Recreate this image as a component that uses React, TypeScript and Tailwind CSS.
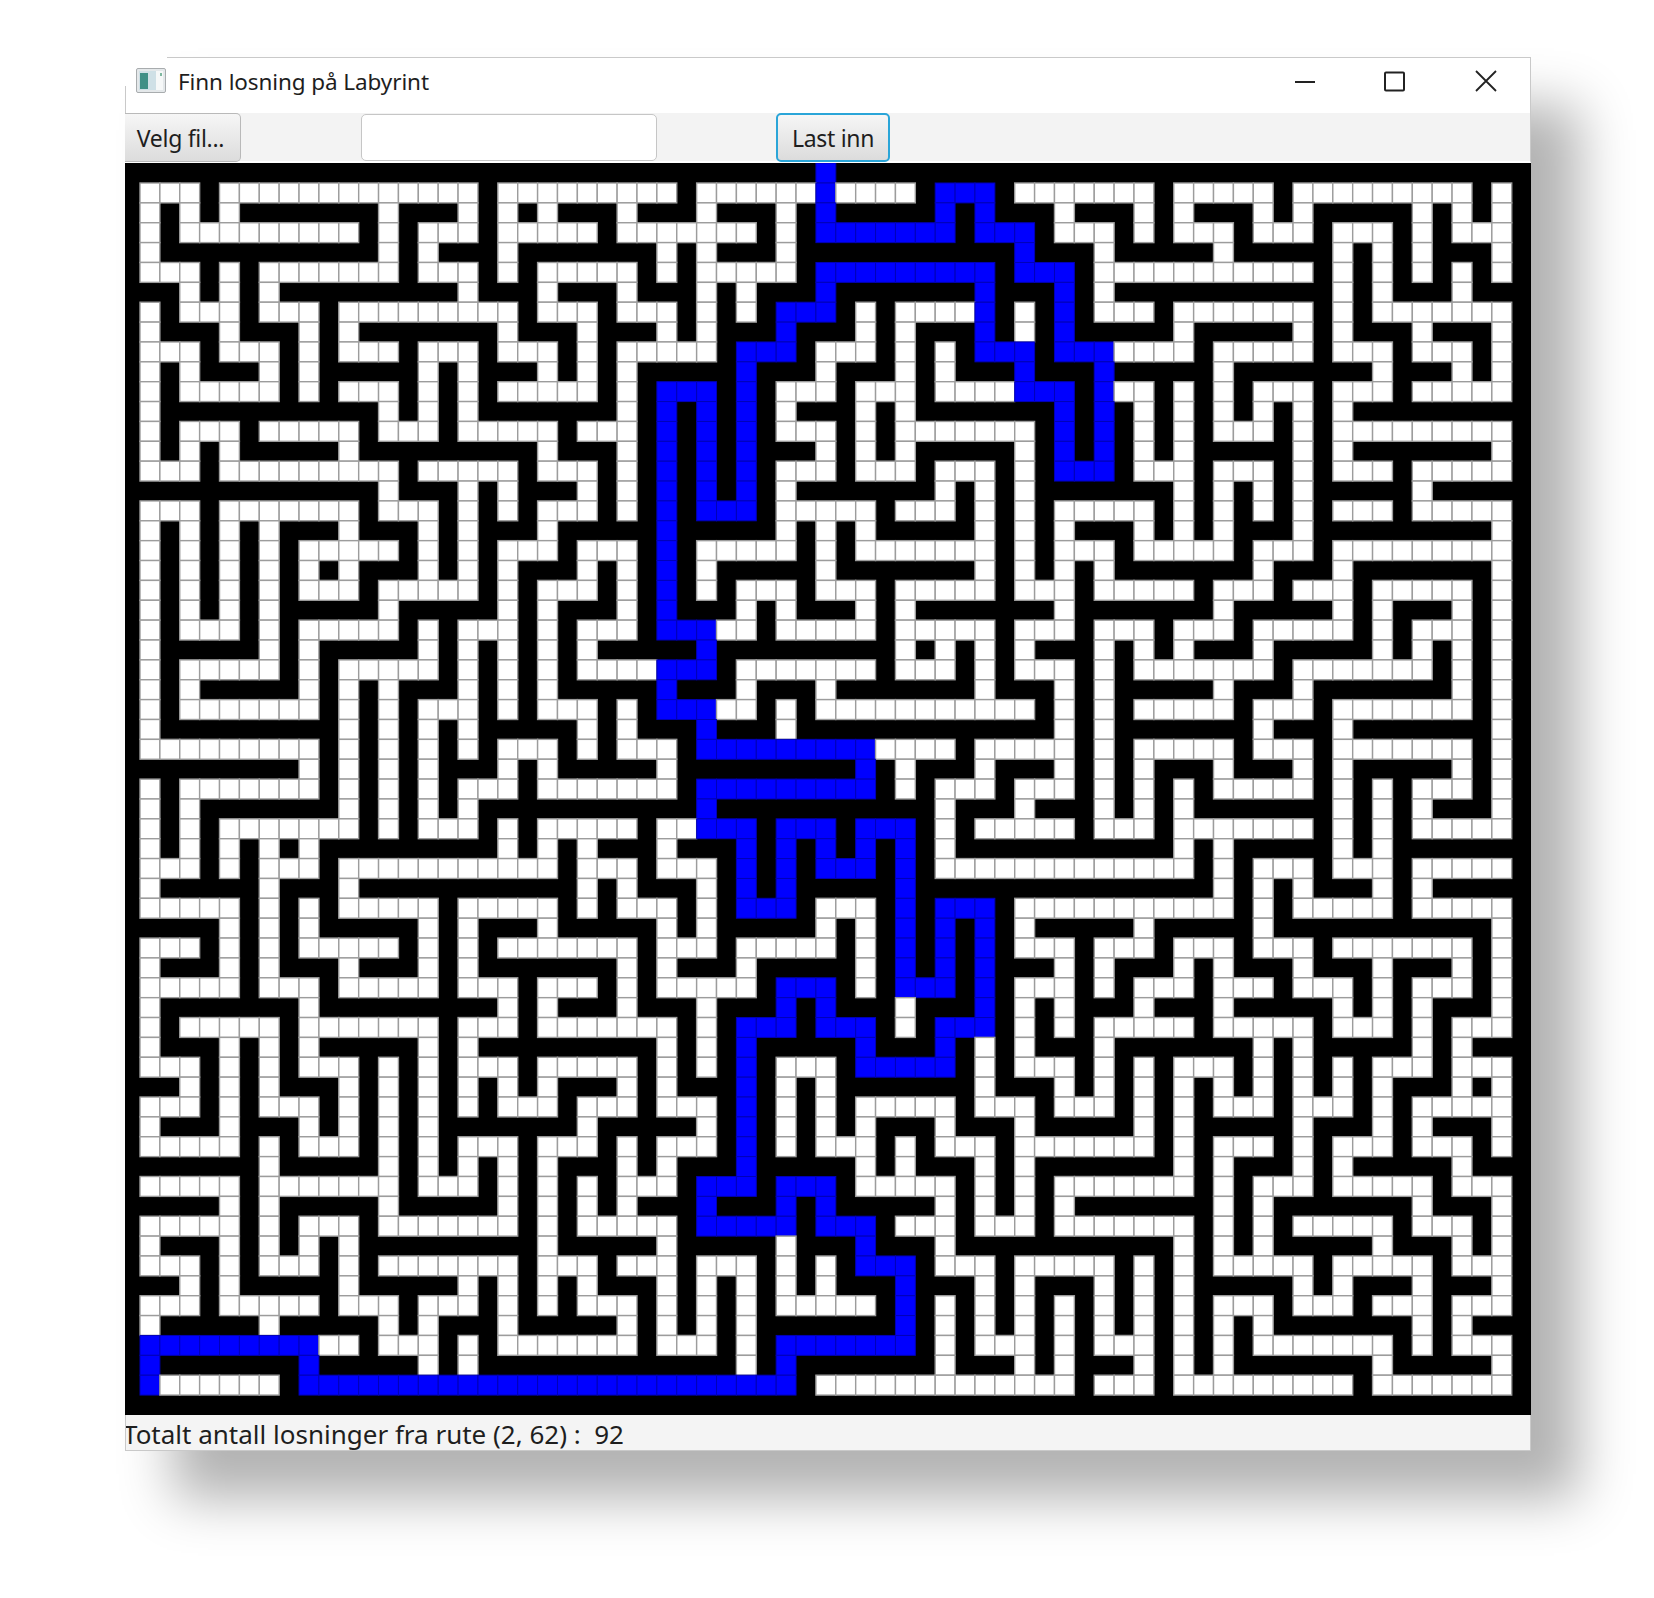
const A = [
"...x.............x......",
".x.x.xxxxxxx.xxx.x.x.xxx",
".x.........x.x...x.....x",
".xxxxxxxxxxx.x.xxx.xxxxx",
"...x.x.......x...x.x....",
"xx.x.x.xxxxxxxxx.xxx.xxx",
".x...x...x.........x...x",
".xxx.xxx.x.xxxxxxx.xxx.x",
"...x...x.x...x...x...x.x",
".x.xxx.x.xxxxx.x.xxx.x.x",
".x.....x.x...x.x.x.....x",
".xxxxxxxxxxx.x.x.xxxxxxx",
".x...x.....x...x.....x..",
".x.x.xxxxx.xxxxxxxxx.xxx",
"...x.........x.....x...x",
"xxxxxxxxxxxx.xxx.x.xxx.x",
"...x.......x...x.x.x...x",
".x.x.x.xxx.xxx.x.xxx.xxx",
".x.x.x.x.....x.x.x...x..",
".x.x.x.x.x.xxx.x.x.xxx.x",
".x.x.x.x...x.....x.x...x",
".x.x.x.xxxxx.xxxxx.x.xxx",
".x...x.x.....x.x...x.x..",
".xxxxx.x.xxxxx.x.x.x.x.x",
".x.....x.x.....x.x.x.x..",
".x.xxxxx.x.x.xxx.x.x.xxx",
".x.......x.x.x...x.x...x",
".xxxxxxxxx.x.x.x.xxxxx.x",
".........x.x.x.x.x...x.x",
"xxxxxxxx.x.x.x.xxx.x.xxx",
".x.......x.x.x.x...x....",
".x.xxxxxxx.x.x.x.xxxxxxx",
".x.x.......x.x...x.x....",
".x.x.x.x.xxxxxxxxx.x.x.x",
"...x.x...x...........x..",
".xxxxx.xxx.xxxxxxxxxxx.x",
".....x.x.x.....x.....x.x",
"xxxx.x.x.xxxxx.x.xxx.xxx",
"...x.x.x.....x.x.x......",
".xxx.x.xxx.xxx.x.xxxxxxx",
".....x...x.....x...x...x",
".xxxxxxx.xxxxxxxxx.x.xxx",
".x.....x.......x...x....",
".xxx.x.x.xxxxx.x.xxxxxxx",
"...x.x.x...x.x.x...x....",
"xx.x.x.xxx.x.x.x.x.x.xxx",
"...x.x...x.x.x.x.x...x..",
".xxx.xxx.x.x.x.xxxxxxx.x",
".....x.x...x.x.x...x...x",
"xxxxxx.xxxxx.x.x.x.x.xxx",
".....x.......x...x.x.x.x",
"xxxx.x.xxxxx.xxxxx.x.x.x",
".....x.x...x.......x.x..",
".xxx.x.x.x.xxxxxxxxx.xxx",
"...x.x...x.x.......x...x",
"xx.x.xxxxx.xxxxx.x.x.x.x",
"...x.....x...x...x.x.x..",
".xxxxx.xxxxx.x.xxx.xxxxx",
"ooooooooo..x...x.x......",
"oxxxxxxxoxxxxx.x.xxxxxxx",
"o......xoooooooooooooooo",
];
const B = [
"...x......o....xooox...",
".xxx.xxx.xoxxxxxoxoxxx.",
".......x.xoooooooxooox.",
"xx.x.xxx.xxxxxxxxxxxoxx",
".x.x.....xoooooooooxooo",
".xxx.x.xxxoxxxxxxxoxxxo",
"...x.x.xooox.x....ox.xo",
"xx.x.xxxoxxx.x.xxxox.xo",
".....xooox...x.x.xoooxo",
".xxxxxoxxx.xxx.x.xxxoxx",
".xoooxox...x...x....ooo",
".xoxoxox.xxx.x.xxxxxxxo",
".xoxoxox...x.x.......xo",
".xoxoxoxxx.x.x.xxxxx.xo",
".xoxoxox...x...x...x.xo",
".xoxoxox.xxxxxxx.x.x.xx",
".xoxooox.....x...x.x.x.",
"xxoxxxxx.x.x.xxxxx.x.x.",
".xox.....x.x.......x.x.",
".xox.xxxxx.xxxxxxx.x.x.",
".xox.x...x...x.....x...",
".xoxxx.x.xxx.x.xxxxxxx.",
".xooo..x.....x.....x...",
"xxxxoxxxxxxxxx.x.x.x.xx",
"..ooox.......x...x.x...",
"xxoxxx.xxx.xxxxxxx.xxx.",
".xooo..x.x...........x.",
".xxxoxxx.xxxxxxxxxxxxx.",
"...xooooooooo....x.....",
"xx.xxxxxxxxxox.xxx.xxx.",
"...xooooooooox.x...x...",
"xxxxoxxxxxxxxxxx.xxx.xx",
".x..oooxoooxooox.x.....",
"xx.xxxoxoxoxoxox.xxxxxx",
".x...xoxoxoooxox.......",
".xxx.xoxoxxxxxoxxxxxxxx",
"...x.xooox...xoxooox...",
"xx.x.xxxxx.x.xoxoxox.xx",
".x...x.....x.xoxoxox...",
".x.xxx.xxxxx.xoxoxoxxx.",
".x.....xooox.xoooxox...",
".xxx.xxxoxoxxx.xxxox.x.",
"...x.xoooxooox.xooox.x.",
"xx.x.xoxxxxxoxxxox.x.xx",
".x.x.xox...xooooox.x...",
".x.xxxox.x.xxxxxxx.xxx.",
".x...xox.x.x.....x...x.",
"xxxx.xox.x.x.xxx.xxx.xx",
".x...xox.x...x.x...x...",
".x.xxxoxxxxx.x.xxx.x.xx",
"...xoooxooox.....x.x.x.",
".xxxoxxxoxoxxxxx.x.x.x.",
"...xoooooxooox...x...x.",
"xx.xxxxx.xxxoxxx.xxxxxx",
"...x...x.x.xooox...x...",
"xx.x.x.x.x.xxxoxxx.x.xx",
".x.x.x.x.....xox.x.x.x.",
".x.x.x.xxxxxxxox.x.x.x.",
".x...x.xooooooox.x...x.",
"xxxxxx.xoxxxxxxx.xxx.x.",
"ooooooooox.............",
];
const C = [
"....x.....x.........x.",
"xxx.x.xxx.x.xxxxx.x.x.",
"..x.x...x...x...x.x...",
"x.xxxxx.xxxxx.x.x.xxx.",
"x...........x.x.x.x.x.",
"x.xxxxxxxxxxx.x.xxx.xx",
"x...x.......x.x.......",
"xxxxx.xxxxx.x.xxx.xxx.",
"oo....x.....x...x...x.",
"xoxxxxx.xxxxxxx.xxx.x.",
"xo..x.x.x...x...x.....",
"xox.x.x.x.x.x.xxxxxxxx",
"xox.x.x...x.x.........",
"xox.x.xxxxx.x.xxxxxxx.",
"oox...x...x.x...x.....",
"xxxxx.x.x.x.xxxxx.xxxx",
"....x.x.x.x.x...x.....",
"xxx.x.x.xxx.xxxxxxxxx.",
"..x.....x...x.........",
"x.xxxxxxx.xxx.xxxxxxx.",
"x.....x...x...x.....x.",
"xxxxxxx.xxxxx.x.xxx.x.",
"x...x...x.....x.x...x.",
"x.x.x.xxx.xxxxx.x.x.x.",
"x.x.......x.......x.x.",
"x.xxxxx.xxx.xxxxxxx.x.",
"x.x.....x...x.......x.",
"x.xxxxxxx.xxx.xxxxxxx.",
"x.x.....x...x.......x.",
"x.x.xxx.xxx.x.xxxxx.x.",
"x.x.x.x.....x.x.x...x.",
"x.x.x.xxxxxxx.x.x.xxx.",
"x...x.......x.x.x.....",
"xxxxx.x.xxxxx.x.xxxxxx",
"......x.x...x...x.....",
"xxxxxxx.x.x.xxx.x.xxxx",
"........x.x.....x.....",
"xxx.xxxxx.xxxxxxxxxxx.",
"x...x...x...x.......x.",
"x.xxx.x.xxx.xxx.xxx.x.",
"x.x...x...x...x.x...x.",
"xxx.xxx.xxxxx.x.x.xxx.",
"x.....x.....x...x.x...",
"x.xxxxxxx.x.xxxxx.x.xx",
"x.x.x...x.x.x.x...x...",
"x.x.x.x.x.x.x.x.xxx.x.",
"..x.x.x...x...x.x.....",
"xxx.x.xxxxx.xxx.x.xxx.",
"....x.x...x.x...x...x.",
"xxxxx.x.xxx.x.xxxxx.xx",
"......x.x...x.....x...",
"xxxxxxx.x.xxxxxxx.xxx.",
"......x.x.x.....x...x.",
"xxxxx.x.x.xxxxx.xxx.x.",
"..x.x.x.....x.....x...",
"x.x.x.xxxxx.x.xxx.xxx.",
"x.x.x.x...x...x...x...",
"x.x.x.x.x.xxxxxxx.x.xx",
"x...x.x.x.......x.x...",
"xxx.x.x.xxxxxxx.xxxxx.",
"x...x.........x.......",
];

const CELL_X = 19.88;
const CELL_Y = 19.87;
const LEFT = 15;
const TOP = 20;

function Maze() {
  const rects: React.ReactNode[] = [];
  A.forEach((part, j) => {
    const row = part + B[j] + C[j];
    for (let i = 0; i < row.length; i++) {
      const ch = row[i];
      if (ch === "x") continue;
      rects.push(
        <rect
          key={`${i}-${j}`}
          x={LEFT + i * CELL_X}
          y={TOP + j * CELL_Y}
          width={CELL_X}
          height={CELL_Y}
          fill={ch === "o" ? "#0000ff" : "#ffffff"}
          stroke={ch === "o" ? "#0000b8" : "#9c9c9c"}
          strokeWidth={ch === "o" ? 1 : 1.4}
        />
      );
    }
  });
  return (
    <svg width={1406} height={1252} viewBox="0 0 1406 1252" className="block bg-black">
      <rect x={LEFT + 34 * CELL_X} y={0} width={CELL_X} height={TOP} fill="#0000ff" stroke="#0000b8" strokeWidth={1} />
      {rects}
    </svg>
  );
}

function AppIcon() {
  return (
    <svg width="30" height="25" viewBox="0 0 30 25" className="block shrink-0">
      <rect x="0.5" y="0.5" width="29" height="24" rx="1.5" fill="#e4e8ea" stroke="#a8acae" />
      <rect x="3" y="3" width="24" height="19" fill="#cfe0e6" />
      <rect x="4" y="5" width="8" height="16" fill="#3f8f86" />
      <rect x="20" y="3" width="7" height="19" fill="#f6f8f8" />
      <rect x="24" y="5" width="2" height="3" fill="#7fb8a0" />
    </svg>
  );
}

export default function App() {
  return (
    <div className="min-h-[1598px] bg-white pl-[125px] pt-[57px] font-['Noto_Sans','Open_Sans',sans-serif] text-[#1e1e1e]">
      <div className="w-[1406px] shadow-[48px_48px_50px_rgba(0,0,0,0.3)]">
        <div className="relative flex h-[56px] items-start border-x border-t border-[#c9c9c9] bg-white">
          <div className="absolute -left-px -top-px h-[29px] w-[42px] bg-white" />
          <div className="relative ml-[10px] mt-[10px]">
            <AppIcon />
          </div>
          <span className="relative ml-[12px] mt-[8px] text-[22.5px] leading-[32px] tracking-[-0.1px]">Finn losning på Labyrint</span>
          <div className="ml-auto flex items-start">
            <svg width="22" height="22" viewBox="0 0 22 22" className="mr-[67px] mt-[13px]">
              <path d="M1 11H21" stroke="#222" strokeWidth="2" />
            </svg>
            <svg width="22" height="22" viewBox="0 0 22 22" className="mr-[69px] mt-[13px]">
              <rect x="2" y="1.5" width="19" height="18" rx="1" fill="none" stroke="#222" strokeWidth="2" />
            </svg>
            <svg width="24" height="24" viewBox="0 0 24 24" className="mr-[32px] mt-[11px]">
              <path d="M2 2L22 22M22 2L2 22" stroke="#222" strokeWidth="1.8" />
            </svg>
          </div>
        </div>
        <div className="flex h-[50px] items-start border-r border-[#c9c9c9] border-b-2 border-b-white bg-[#f3f3f3]">
          <button className="h-[49px] w-[116px] rounded-r-[5px] border border-l-0 border-[#b9b9b9] bg-gradient-to-b from-[#f6f6f6] to-[#dcdcdc] pr-[4px] pt-[2px] text-[23px] leading-none tracking-[-0.3px]">
            Velg fil...
          </button>
          <div className="ml-[120px] mt-[1px] h-[47px] w-[296px] rounded-[5px] border border-[#c6c6c6] bg-white" />
          <button className="ml-[119px] h-[49px] w-[114px] rounded-[5px] border-2 border-[#2aa5d8] bg-gradient-to-b from-[#f6f6f6] to-[#dcdcdc] pt-[2px] text-[23px] leading-none tracking-[-0.3px]">
            Last inn
          </button>
        </div>
        <Maze />
        <div className="h-[36px] overflow-hidden border-x border-b border-[#c9c9c9] bg-[#f4f4f4] text-[26px] leading-[39px] whitespace-pre">
          <span className="-ml-[3px] block">Totalt antall losninger fra rute (2, 62) :  92</span>
        </div>
      </div>
    </div>
  );
}
